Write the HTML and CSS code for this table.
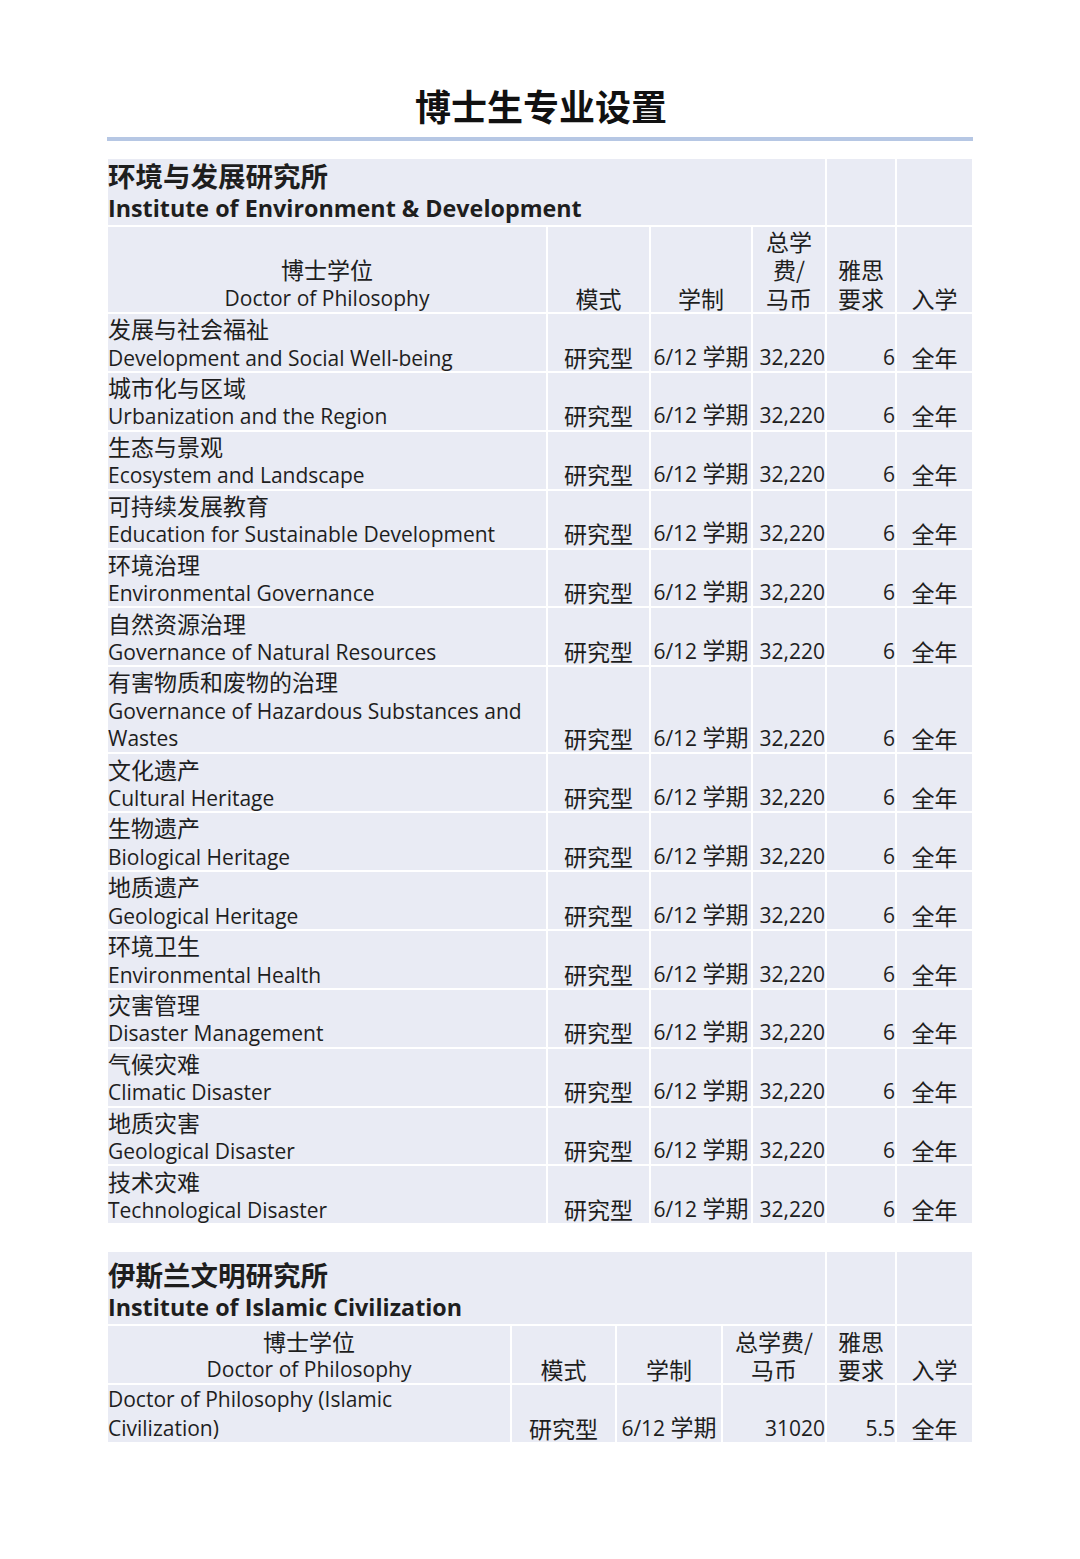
FILE: index.html
```html
<!DOCTYPE html>
<html lang="zh-CN">
<head>
<meta charset="utf-8">
<title>博士生专业设置</title>
<link rel="stylesheet" href="styles.css">
</head>
<body>
<div class="page">
  <h1 class="title">博士生专业设置</h1>
  <div class="rule"></div>

  <table class="prog prog-env">
    <colgroup>
      <col class="c1"><col class="c2"><col class="c3"><col class="c4"><col class="c5"><col class="c6">
    </colgroup>
    <tr class="inst">
      <td colspan="4"><span class="ln zh">环境与发展研究所</span><span class="ln">Institute of Environment &amp; Development</span></td>
      <td></td><td></td>
    </tr>
    <tr class="head">
      <td class="ctr"><span class="ln zh">博士学位</span><span class="ln">Doctor of Philosophy</span></td>
      <td class="ctr zh">模式</td>
      <td class="ctr zh">学制</td>
      <td class="ctr zh"><span class="ln">总学</span><span class="ln">费/</span><span class="ln">马币</span></td>
      <td class="ctr zh"><span class="ln">雅思</span><span class="ln">要求</span></td>
      <td class="ctr zh">入学</td>
    </tr>
    <tr class="item"><td><span class="ln zh">发展与社会福祉</span><span class="ln">Development and Social Well-being</span></td><td class="ctr zh">研究型</td><td class="ctr">6/12 <span class="zh">学期</span></td><td class="num">32,220</td><td class="num">6</td><td class="ctr zh">全年</td></tr>
    <tr class="item"><td><span class="ln zh">城市化与区域</span><span class="ln">Urbanization and the Region</span></td><td class="ctr zh">研究型</td><td class="ctr">6/12 <span class="zh">学期</span></td><td class="num">32,220</td><td class="num">6</td><td class="ctr zh">全年</td></tr>
    <tr class="item"><td><span class="ln zh">生态与景观</span><span class="ln">Ecosystem and Landscape</span></td><td class="ctr zh">研究型</td><td class="ctr">6/12 <span class="zh">学期</span></td><td class="num">32,220</td><td class="num">6</td><td class="ctr zh">全年</td></tr>
    <tr class="item"><td><span class="ln zh">可持续发展教育</span><span class="ln">Education for Sustainable Development</span></td><td class="ctr zh">研究型</td><td class="ctr">6/12 <span class="zh">学期</span></td><td class="num">32,220</td><td class="num">6</td><td class="ctr zh">全年</td></tr>
    <tr class="item"><td><span class="ln zh">环境治理</span><span class="ln">Environmental Governance</span></td><td class="ctr zh">研究型</td><td class="ctr">6/12 <span class="zh">学期</span></td><td class="num">32,220</td><td class="num">6</td><td class="ctr zh">全年</td></tr>
    <tr class="item"><td><span class="ln zh">自然资源治理</span><span class="ln">Governance of Natural Resources</span></td><td class="ctr zh">研究型</td><td class="ctr">6/12 <span class="zh">学期</span></td><td class="num">32,220</td><td class="num">6</td><td class="ctr zh">全年</td></tr>
    <tr class="item"><td><span class="ln zh">有害物质和废物的治理</span><span class="ln">Governance of Hazardous Substances and</span><span class="ln">Wastes</span></td><td class="ctr zh">研究型</td><td class="ctr">6/12 <span class="zh">学期</span></td><td class="num">32,220</td><td class="num">6</td><td class="ctr zh">全年</td></tr>
    <tr class="item"><td><span class="ln zh">文化遗产</span><span class="ln">Cultural Heritage</span></td><td class="ctr zh">研究型</td><td class="ctr">6/12 <span class="zh">学期</span></td><td class="num">32,220</td><td class="num">6</td><td class="ctr zh">全年</td></tr>
    <tr class="item"><td><span class="ln zh">生物遗产</span><span class="ln">Biological Heritage</span></td><td class="ctr zh">研究型</td><td class="ctr">6/12 <span class="zh">学期</span></td><td class="num">32,220</td><td class="num">6</td><td class="ctr zh">全年</td></tr>
    <tr class="item"><td><span class="ln zh">地质遗产</span><span class="ln">Geological Heritage</span></td><td class="ctr zh">研究型</td><td class="ctr">6/12 <span class="zh">学期</span></td><td class="num">32,220</td><td class="num">6</td><td class="ctr zh">全年</td></tr>
    <tr class="item"><td><span class="ln zh">环境卫生</span><span class="ln">Environmental Health</span></td><td class="ctr zh">研究型</td><td class="ctr">6/12 <span class="zh">学期</span></td><td class="num">32,220</td><td class="num">6</td><td class="ctr zh">全年</td></tr>
    <tr class="item"><td><span class="ln zh">灾害管理</span><span class="ln">Disaster Management</span></td><td class="ctr zh">研究型</td><td class="ctr">6/12 <span class="zh">学期</span></td><td class="num">32,220</td><td class="num">6</td><td class="ctr zh">全年</td></tr>
    <tr class="item"><td><span class="ln zh">气候灾难</span><span class="ln">Climatic Disaster</span></td><td class="ctr zh">研究型</td><td class="ctr">6/12 <span class="zh">学期</span></td><td class="num">32,220</td><td class="num">6</td><td class="ctr zh">全年</td></tr>
    <tr class="item"><td><span class="ln zh">地质灾害</span><span class="ln">Geological Disaster</span></td><td class="ctr zh">研究型</td><td class="ctr">6/12 <span class="zh">学期</span></td><td class="num">32,220</td><td class="num">6</td><td class="ctr zh">全年</td></tr>
    <tr class="item"><td><span class="ln zh">技术灾难</span><span class="ln">Technological Disaster</span></td><td class="ctr zh">研究型</td><td class="ctr">6/12 <span class="zh">学期</span></td><td class="num">32,220</td><td class="num">6</td><td class="ctr zh">全年</td></tr>
  </table>

  <table class="prog prog-isl">
    <colgroup>
      <col class="d1"><col class="d2"><col class="d3"><col class="d4"><col class="c5"><col class="c6">
    </colgroup>
    <tr class="inst inst2">
      <td colspan="4"><span class="ln zh">伊斯兰文明研究所</span><span class="ln">Institute of Islamic Civilization</span></td>
      <td></td><td></td>
    </tr>
    <tr class="head2">
      <td class="ctr"><span class="ln zh">博士学位</span><span class="ln">Doctor of Philosophy</span></td>
      <td class="ctr zh">模式</td>
      <td class="ctr zh">学制</td>
      <td class="ctr zh"><span class="ln">总学费/</span><span class="ln">马币</span></td>
      <td class="ctr zh"><span class="ln">雅思</span><span class="ln">要求</span></td>
      <td class="ctr zh">入学</td>
    </tr>
    <tr class="isl-row"><td><span class="ln">Doctor of Philosophy (Islamic</span><span class="ln">Civilization)</span></td><td class="ctr zh">研究型</td><td class="ctr">6/12 <span class="zh">学期</span></td><td class="num">31020</td><td class="num">5.5</td><td class="ctr zh">全年</td></tr>
  </table>
</div>
</body>
</html>
```

FILE: styles.css
```css
html, body {
  margin: 0;
  padding: 0;
  background: #ffffff;
}

.page {
  width: 868px;
  margin-left: 106px;
  padding-top: 83px;
  font-family: "Open Sans", "Noto Sans CJK SC", sans-serif;
  color: #1e1e1e;
}

.title {
  margin: 0 0 0 2px;
  font-family: "Noto Sans CJK SC", sans-serif;
  font-weight: 700;
  font-size: 36px;
  line-height: 44px;
  text-align: center;
  color: #111;
}

.rule {
  margin: 10px 0 0 1px;
  width: 866px;
  height: 4px;
  background: #b6c7e4;
}

.prog {
  border-collapse: separate;
  border-spacing: 2px;
  table-layout: fixed;
  width: 868px;
  font-size: 21px;
  line-height: 28.3px;
}

.prog-env { margin-top: 16px; }
.prog-isl { margin-top: 25px; }

.c1 { width: 438px; }
.c2 { width: 101px; }
.c3 { width: 100px; }
.c4 { width: 72px; }
.c5 { width: 68px; }
.c6 { width: 75px; }

.d1 { width: 402px; }
.d2 { width: 103px; }
.d3 { width: 104px; }
.d4 { width: 102px; }

.prog td {
  background: #e9ebf4;
  padding: 0;
  vertical-align: bottom;
  height: 56.9px;
}

.ln {
  display: block;
  white-space: nowrap;
}

.zh {
  font-family: "Noto Sans CJK SC", sans-serif;
  font-size: 23px;
}

.item .ln.zh { margin-bottom: 3px; }
.item .ln.zh + .ln { line-height: 25.3px; }

.ctr { text-align: center; }
.num { text-align: right; padding-right: 1px; }

.inst td {
  font-weight: 700;
  font-size: 23.3px;
  line-height: 33px;
  height: 66px;
}
.inst .zh { font-size: 27.5px; }

.inst2 td { height: 72px; }

.head td { height: 85px; }

.head2 td { height: 57px; }
.isl-row td { height: 55px; }
```
